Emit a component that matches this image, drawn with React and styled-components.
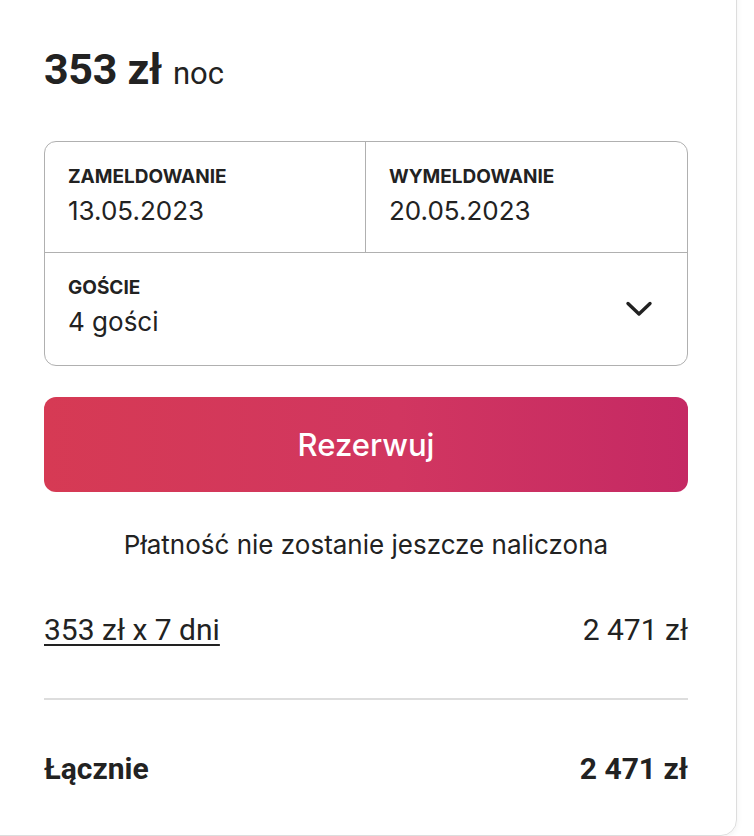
import React from "react";
import styled, { createGlobalStyle } from "styled-components";

const GlobalStyle = createGlobalStyle`
  html, body {
    margin: 0;
    padding: 0;
    background: #fff;
    overflow: hidden;
  }
  body {
    font-family: "Inter", "Noto Sans", sans-serif;
    color: #222;
  }
`;

const Page = styled.div`
  width: 754px;
  height: 836px;
  padding-right: 17px;
  box-sizing: border-box;
  overflow: hidden;
`;

const Card = styled.div`
  margin-top: -30px;
  margin-left: -20px;
  height: 866px;
  box-sizing: border-box;
  border: 1px solid #dddddd;
  border-radius: 16px;
  box-shadow: 0 2px 6px rgba(0, 0, 0, 0.06);
  padding: 74px 48px 0 63px;
  display: flex;
  flex-direction: column;
`;

const PriceLine = styled.div`
  font-family: "Roboto", "Liberation Sans", sans-serif;
  line-height: 48px;
  display: flex;
  align-items: baseline;
  gap: 11px;
`;

const Price = styled.span`
  font-size: 43px;
  font-weight: 700;
  letter-spacing: -0.3px;
`;

const Per = styled.span`
  font-size: 31px;
  font-weight: 400;
`;

const Picker = styled.div`
  margin-top: 43px;
  border: 1.5px solid #b0b0b0;
  border-radius: 12px;
  display: grid;
  grid-template-columns: 1fr 1fr;
  overflow: hidden;
`;

const Cell = styled.div`
  height: ${(p) => p.$h}px;
  box-sizing: border-box;
  padding: 23px 24px 0 23px;
  grid-column: ${(p) => (p.$wide ? "1 / 3" : "auto")};
  border-right: ${(p) => (p.$divider ? "1.5px solid #b0b0b0" : "none")};
  border-bottom: ${(p) => (p.$bottom ? "1.5px solid #b0b0b0" : "none")};
  display: flex;
  align-items: center;
  justify-content: space-between;
`;

const CellText = styled.div`
  display: flex;
  flex-direction: column;
  align-self: flex-start;
`;

const Label = styled.div`
  font-size: 19px;
  font-weight: 700;
  line-height: 24px;
  text-transform: uppercase;
`;

const Value = styled.div`
  margin-top: 6px;
  font-size: 26px;
  line-height: 32px;
  font-weight: 400;
`;

const Chevron = styled.svg`
  width: 28px;
  height: 18px;
  margin-right: 10px;
  margin-bottom: 24px;
`;

const BookButton = styled.button`
  margin-top: 31px;
  height: 95px;
  border: none;
  border-radius: 12px;
  background: linear-gradient(to right, #d63a54 0%, #d13660 55%, #c52964 100%);
  color: #fff;
  font-family: "Inter", "Noto Sans", sans-serif;
  font-size: 31px;
  font-weight: 500;
  cursor: pointer;
`;

const Note = styled.div`
  margin-top: 37px;
  text-align: center;
  font-size: 26px;
  line-height: 32px;
`;

const Row = styled.div`
  margin-top: ${(p) => p.$top}px;
  display: flex;
  justify-content: space-between;
  align-items: center;
  font-family: "Roboto", "Liberation Sans", sans-serif;
  font-size: 30px;
  line-height: 32px;
  font-weight: ${(p) => (p.$bold ? 700 : 400)};
`;

const Detail = styled.span`
  text-decoration: underline;
  text-underline-offset: 4px;
  text-decoration-thickness: 1.5px;
`;

const Divider = styled.hr`
  margin: 52px 0 0 0;
  border: none;
  border-top: 2px solid #dddddd;
`;

export default function App() {
  return (
    <>
      <GlobalStyle />
      <Page>
        <Card>
          <PriceLine>
            <Price>353 zł</Price>
            <Per>noc</Per>
          </PriceLine>

          <Picker>
            <Cell $h={111} $divider $bottom>
              <CellText>
                <Label>Zameldowanie</Label>
                <Value>13.05.2023</Value>
              </CellText>
            </Cell>
            <Cell $h={111} $bottom>
              <CellText>
                <Label>Wymeldowanie</Label>
                <Value>20.05.2023</Value>
              </CellText>
            </Cell>
            <Cell $h={112} $wide>
              <CellText>
                <Label>Goście</Label>
                <Value>4 gości</Value>
              </CellText>
              <Chevron viewBox="0 0 28 18" fill="none">
                <path
                  d="M3 3.5 L14 14 L25 3.5"
                  stroke="#222"
                  strokeWidth="3.4"
                  strokeLinecap="round"
                  strokeLinejoin="round"
                />
              </Chevron>
            </Cell>
          </Picker>

          <BookButton type="button">Rezerwuj</BookButton>

          <Note>Płatność nie zostanie jeszcze naliczona</Note>

          <Row $top={53}>
            <Detail>353 zł x 7 dni</Detail>
            <span>2 471 zł</span>
          </Row>

          <Divider />

          <Row $top={53} $bold>
            <span>Łącznie</span>
            <span>2 471 zł</span>
          </Row>
        </Card>
      </Page>
    </>
  );
}
